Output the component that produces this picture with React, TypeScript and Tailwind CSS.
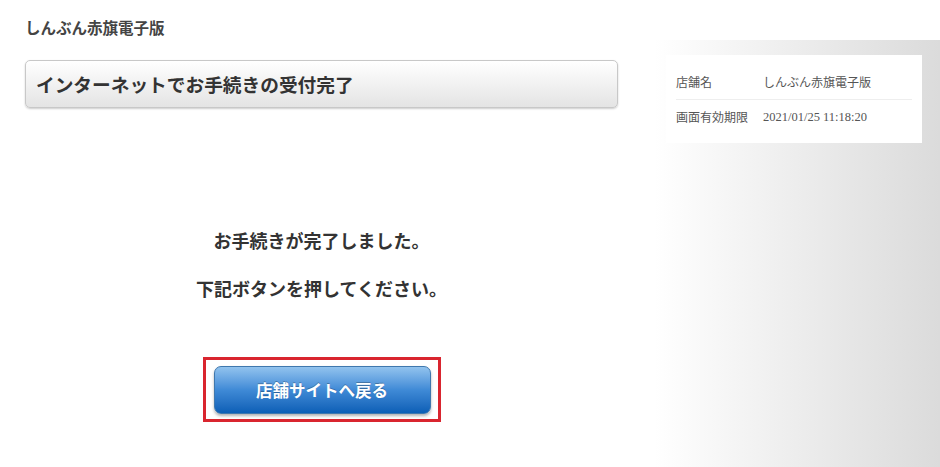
//完了ページ

const jp = "font-['Noto_Sans_CJK_JP','Noto_Sans',sans-serif]";

function InfoCard() {
  return (
    <div className="bg-white mr-[18px] ml-[11px] px-[10px] pt-[10px] pb-[9px] text-[12px] leading-[20px] text-[#555]">
      <div className="flex py-[7px] border-b border-[#eeeeee]">
        <span className="w-[87px]">店舗名</span>
        <span>しんぶん赤旗電子版</span>
      </div>
      <div className="flex py-[7px]">
        <span className="w-[87px]">画面有効期限</span>
        <span className="font-['Liberation_Serif',serif] text-[12.5px]">2021/01/25 11:18:20</span>
      </div>
    </div>
  );
}

export default function App() {
  return (
    <div className={`flex w-[940px] h-[467px] overflow-hidden bg-white ${jp}`}>
      <div className="w-[593px] ml-[25px] shrink-0">
        <div className="pt-[17px] text-[15.5px] leading-[20px] font-bold text-[#444]">しんぶん赤旗電子版</div>

        <div className="mt-[23px] h-[48px] flex items-center px-[10px] rounded-[5px] border border-[#c8c8c8] bg-gradient-to-b from-white to-[#e4e4e4] shadow-[0_1px_2px_rgba(0,0,0,0.2)]">
          <h1 className="text-[18.7px] font-bold text-[#333] leading-none">インターネットでお手続きの受付完了</h1>
        </div>

        <div className="flex flex-col items-center text-[18px] leading-[24px] font-bold text-[#333]">
          <p className="mt-[120px]">お手続きが完了しました。</p>
          <p className="mt-[24px]">下記ボタンを押してください。</p>

          <div className="mt-[57px] border-[3px] border-[#d9252f] pt-[6px] pb-[5px] pl-[8px] pr-[7px]">
            <button className="w-[217px] h-[48px] rounded-[7px] border border-[#3f78ae] bg-gradient-to-b from-[#92c3ee] via-[#3f8ad6] to-[#0a5fb6] text-white text-[16.5px] font-bold shadow-[0_2px_3px_rgba(0,0,0,0.3)] [text-shadow:0_-1px_0_rgba(0,0,0,0.25)]">
              店舗サイトへ戻る
            </button>
          </div>
        </div>
      </div>

      <div className="ml-[37px] mt-[40px] flex-1 pt-[15px] bg-gradient-to-r from-white to-[#dbdbdb]">
        <InfoCard />
      </div>
    </div>
  );
}
